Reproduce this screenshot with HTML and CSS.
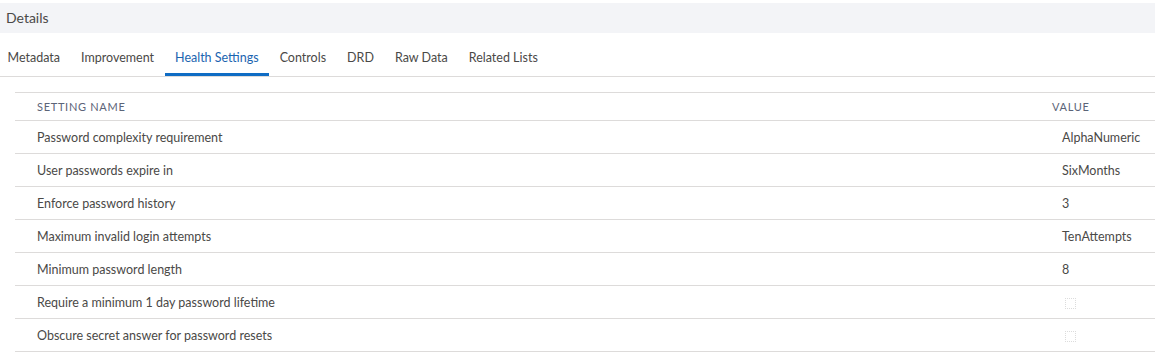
FILE: index.html
```html
<!DOCTYPE html>
<html lang="en">
<head>
<meta charset="utf-8">
<title>Details</title>
<link rel="stylesheet" href="styles.css">
</head>
<body>
<div class="header">Details</div>
<div class="tabs">
  <div class="tab">Metadata</div>
  <div class="tab">Improvement</div>
  <div class="tab active">Health Settings</div>
  <div class="tab">Controls</div>
  <div class="tab">DRD</div>
  <div class="tab">Raw Data</div>
  <div class="tab">Related Lists</div>
</div>
<div class="panel">
  <table class="grid">
    <thead>
      <tr><th class="name">Setting Name</th><th class="value">Value</th></tr>
    </thead>
    <tbody>
      <tr><td class="name">Password complexity requirement</td><td class="value">AlphaNumeric</td></tr>
      <tr><td class="name">User passwords expire in</td><td class="value">SixMonths</td></tr>
      <tr><td class="name">Enforce password history</td><td class="value">3</td></tr>
      <tr><td class="name">Maximum invalid login attempts</td><td class="value">TenAttempts</td></tr>
      <tr><td class="name">Minimum password length</td><td class="value">8</td></tr>
      <tr><td class="name">Require a minimum 1 day password lifetime</td><td class="value"><span class="check"></span></td></tr>
      <tr><td class="name">Obscure secret answer for password resets</td><td class="value"><span class="check"></span></td></tr>
    </tbody>
  </table>
</div>
</body>
</html>
```

FILE: styles.css
```css
html, body {
  margin: 0;
  padding: 0;
  background: #ffffff;
}
body {
  font-family: Lato, "Open Sans", sans-serif;
  font-size: 12.5px;
  color: #4a4947;
}
.header {
  margin-top: 3px;
  height: 30px;
  line-height: 30px;
  padding-left: 6px;
  background: #f3f4f7;
  font-size: 14px;
  color: #4a4947;
}
.tabs {
  display: flex;
  box-sizing: border-box;
  height: 44px;
  margin-left: -3px;
  border-bottom: 1px solid #dddbda;
}
.tab {
  display: flex;
  align-items: center;
  padding: 8px 10.5px 0;
  border-bottom: 3px solid transparent;
  color: #4a4947;
  font-size: 12.5px;
}
.tab.active {
  color: #1b64b0;
  border-bottom-color: #0f6cc4;
}
.panel {
  padding: 15px 0 0 15px;
}
.grid {
  width: 100%;
  border-collapse: collapse;
  border-top: 1px solid #dddbda;
}
.grid th {
  height: 27px;
  padding: 0;
  text-align: left;
  font-weight: normal;
  font-size: 11px;
  letter-spacing: 0.7px;
  text-transform: uppercase;
  color: #5b6478;
  border-bottom: 1px solid #dddbda;
}
.grid td {
  height: 32px;
  padding: 0;
  border-bottom: 1px solid #dddbda;
  color: #4a4947;
}
.grid .name {
  padding-left: 22px;
}
.grid th.value {
  width: 103px;
}
.grid td.value {
  padding-left: 10px;
}
.check {
  display: inline-block;
  width: 9px;
  height: 9px;
  margin-left: 3px;
  border: 1px dotted #dcdcdc;
  vertical-align: middle;
}
```
